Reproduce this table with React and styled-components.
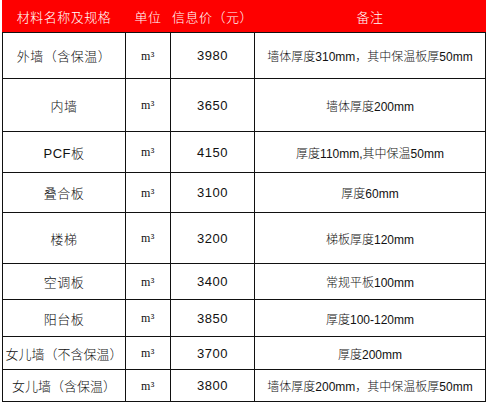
import styled, { createGlobalStyle } from "styled-components";

const GlobalStyle = createGlobalStyle`
  html, body {
    margin: 0;
    padding: 0;
    background: #fff;
  }
  body {
    font-family: "Liberation Sans", "Noto Sans CJK SC", sans-serif;
  }
`;

const Page = styled.div`
  width: 488px;
  height: 404px;
  padding-left: 2px;
  box-sizing: border-box;
  overflow: hidden;
`;

const Table = styled.table`
  border-collapse: collapse;
  table-layout: fixed;
  width: 483px;
`;

const HeadCell = styled.th`
  background: #fe0000;
  color: #fff;
  font-weight: 300;
  font-size: 13px;
  height: 31px;
  padding: 0;
  text-align: center;
  border: 1px solid #fe0000;
  border-bottom: 1px solid #111;
  letter-spacing: 0.5px;
`;

const Row = styled.tr`
  height: ${(p) => p.h}px;
`;

const Cell = styled.td`
  border: 1px solid #111;
  padding: 0;
  text-align: center;
  font-size: ${(p) => (p.$small ? 12 : 13)}px;
  font-weight: 300;
  color: #111;
  white-space: nowrap;
  letter-spacing: ${(p) => (p.$tight ? "0" : "0.5px")};
`;

const Unit = styled.span`
  font-family: "Liberation Serif", serif;
  font-size: 12px;
`;

const rows = [
  { name: "外墙（含保温）", price: "3980", note: "墙体厚度310mm，其中保温板厚50mm", h: 46 },
  { name: "内墙", price: "3650", note: "墙体厚度200mm", h: 53 },
  { name: "PCF板", price: "4150", note: "厚度110mm,其中保温50mm", h: 41 },
  { name: "叠合板", price: "3100", note: "厚度60mm", h: 40 },
  { name: "楼梯", price: "3200", note: "梯板厚度120mm", h: 51 },
  { name: "空调板", price: "3400", note: "常规平板100mm", h: 36 },
  { name: "阳台板", price: "3850", note: "厚度100-120mm", h: 37 },
  { name: "女儿墙（不含保温）", price: "3700", note: "厚度200mm", h: 33 },
  { name: "女儿墙（含保温）", price: "3800", note: "墙体厚度200mm，其中保温板厚50mm", h: 32 },
];

export default function App() {
  return (
    <Page>
      <GlobalStyle />
      <Table>
        <colgroup>
          <col style={{ width: 123 }} />
          <col style={{ width: 45 }} />
          <col style={{ width: 84 }} />
          <col style={{ width: 231 }} />
        </colgroup>
        <thead>
          <tr>
            <HeadCell>材料名称及规格</HeadCell>
            <HeadCell>单位</HeadCell>
            <HeadCell>信息价（元）</HeadCell>
            <HeadCell>备注</HeadCell>
          </tr>
        </thead>
        <tbody>
          {rows.map((r) => (
            <Row key={r.name} h={r.h}>
              <Cell $tight={r.name.length > 7}>{r.name}</Cell>
              <Cell>
                <Unit>m³</Unit>
              </Cell>
              <Cell>{r.price}</Cell>
              <Cell $tight $small>
                {r.note}
              </Cell>
            </Row>
          ))}
        </tbody>
      </Table>
    </Page>
  );
}
